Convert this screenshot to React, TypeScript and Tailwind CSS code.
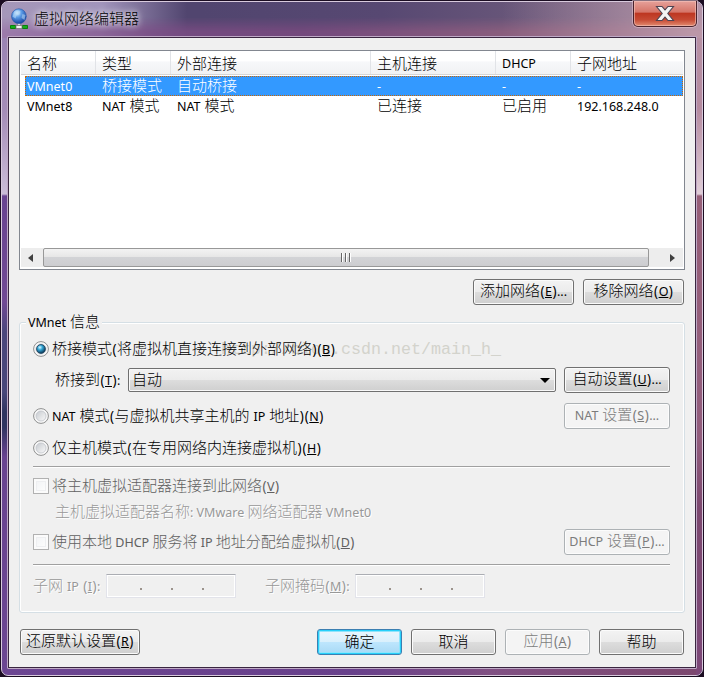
import React from "react";

const CJK = /([\u3000-\u9fff]+)/;

// Latin run: brackets are drawn a little wider, "&" marks the accelerator key.
function Latin({ run }: { run: string }) {
  return (
    <span className="font-['Noto_Sans',sans-serif] text-[12.5px] leading-none [word-spacing:0.7px]">
      {run.split(/(&.|[()])/).filter(Boolean).map((p, j) => {
        if (p === "(" || p === ")") return <span key={j} className="inline-block w-[5px] text-center text-[13.5px]">{p}</span>;
        if (p[0] === "&") return <u key={j} className="text-[12.5px] underline-offset-1">{p[1]}</u>;
        return p;
      })}
    </span>
  );
}

function T({ s, c = "-top-px" }: { s: string; c?: string }) {
  return (
    <span className={`relative inline-block whitespace-pre leading-none ${c}`}>
      {s.split(CJK).filter(Boolean).map((run, i) =>
        CJK.test(run) ? (
          <span key={i} className="font-['Noto_Sans_CJK_SC',sans-serif] text-[15px] font-light leading-none">{run}</span>
        ) : (
          <Latin key={i} run={run} />
        ),
      )}
    </span>
  );
}

function Btn({ s, c = "w-[85px]", kind = "normal" }: { s: string; c?: string; kind?: "normal" | "off" | "primary" }) {
  const look = {
    normal: "border-[#707070] bg-[linear-gradient(#f3f3f3,#ebebeb_50%,#dddddd_50%,#cfcfcf)] shadow-[inset_0_0_0_1px_#fbfbfb] text-black",
    off: "border-[#adb2b5] bg-[#f4f4f4] shadow-[inset_0_0_0_1px_#fcfcfc] text-[#7c7c7c]",
    primary: "border-[#3c7fb1] bg-[linear-gradient(#eaf6fd,#d9f0fc_50%,#bee6fd_50%,#a7d9f5)] shadow-[inset_0_0_0_1px_#27d0fa,inset_0_0_0_2px_#8fe4fc] text-black",
  }[kind];
  return (
    <button className={`h-[26px] shrink-0 flex items-center justify-center rounded-[3px] border pb-px ${look} ${c}`}>
      <T s={s} />
    </button>
  );
}

function Radio({ on = false }: { on?: boolean }) {
  return (
    <svg width="16" height="16" viewBox="0 0 16 16" className="shrink-0">
      <defs>
        <radialGradient id="dot" cx=".38" cy=".32" r=".7">
          <stop offset="0" stopColor="#d8f8ff" /><stop offset=".4" stopColor="#35a8d8" /><stop offset="1" stopColor="#09304e" />
        </radialGradient>
        <linearGradient id="well" x2="1" y2="1"><stop stopColor="#c6cacf" /><stop offset="1" stopColor="#fafafa" /></linearGradient>
      </defs>
      <circle cx="8" cy="8" r="7.4" fill="#f8f8f8" stroke="#8e8f8f" />
      <circle cx="8" cy="8" r="5" fill="url(#well)" stroke="#c0c4ca" strokeWidth=".8" />
      {on && <circle cx="8" cy="8" r="4.4" fill="url(#dot)" stroke="#153f5c" strokeWidth=".8" />}
    </svg>
  );
}

function Check() {
  return (
    <span className="h-4 w-4 shrink-0 border border-[#b1b1b1] bg-[#fbfbfb] p-[2px]">
      <span className="block h-full w-full border border-[#eeeff1] bg-[linear-gradient(135deg,#f3f4f6,#fcfcfc)]" />
    </span>
  );
}

function IpField() {
  return (
    <span className="flex h-6 w-[130px] shrink-0 items-center border border-[#e2e3ea] border-t-[#abadb3] pl-[33px] shadow-[inset_0_0_0_1px_#fff]">
      {[0, 1, 2].map((i) => <i key={i} className="mr-[29px] mt-[5px] h-[2px] w-[2px] bg-[#9b938c]" />)}
    </span>
  );
}

const cols = ["w-[75px]", "w-[75px]", "w-[200px]", "w-[125px]", "w-[75px]", "w-[106px]"];
function Row({ cells, c }: { cells: string[]; c: string }) {
  return (
    <div className={`flex h-5 items-center ${c}`}>
      {cells.map((t, i) => <span key={i} className={`flex shrink-0 items-center pl-[2px] ${cols[i]}`}><T s={t} /></span>)}
    </div>
  );
}

const Rule = () => <div className="h-[2px] w-[637px] border-t border-[#a0a0a0] bg-white" />;

function NetIcon() {
  return (
    <svg width="20" height="22" viewBox="0 0 20 22" className="shrink-0">
      <defs>
        <radialGradient id="globe" cx=".38" cy=".28" r=".75">
          <stop stopColor="#d6efff" /><stop offset=".4" stopColor="#5b9be6" /><stop offset="1" stopColor="#123f9c" />
        </radialGradient>
      </defs>
      <path d="M7.5 15h3v4h-3z" fill="#d7dce0" stroke="#667" strokeWidth=".5" />
      <circle cx="8.9" cy="8.2" r="7.4" fill="url(#globe)" stroke="#2356a8" strokeWidth=".6" />
      <path d="M4.5 3.5q3-2 6 0l-1 3-3 1-1 3-3-2zM12.5 6l3 1-1 5-3-2z" fill="#b9dcf8" opacity=".55" />
      <path d="M.5 17.5h5v3h-5zM12.5 17.5h5v3h-5z" fill="#14b01c" stroke="#0a7f0d" />
      <path d="M6 17.5h6v3H6z" fill="#f3f3f3" stroke="#777" strokeWidth=".8" />
    </svg>
  );
}

export default function App() {
  return (
    <div className="h-[677px] w-[704px] overflow-hidden bg-[#1b0d22] p-px">
      <div className="relative flex h-[675px] w-[702px] flex-col rounded-[7px] border border-[#d8cadd] bg-[linear-gradient(#8e80b0_0,#9b84b4_40px,#a58db8_110px,#cbbcd8_192px,#694391_194px,#714994_300px,#4b477c_330px,#49477a_390px,#303460_410px,#303460_425px,#694390_455px,#6c4692)] px-[5px]">
        <div className="absolute inset-x-0 top-0 h-[36px] rounded-t-[6px] bg-[linear-gradient(90deg,#a597b9_0,#a194bb_100px,transparent_185px,transparent_500px,#b394a8_690px),linear-gradient(90deg,#51456f_200px,#574872_380px,#75617f_620px)]" />
        <div className="absolute inset-x-0 top-[15px] h-[21px] bg-[linear-gradient(90deg,#9a75a8_0,#7d4d86_150px,#7c4a80_300px,#92607f_500px,#bd98a8_690px)] opacity-80 [mask-image:linear-gradient(transparent,#000_70%)]" />
        <div className="absolute bottom-0 right-0 top-[36px] w-[7px] rounded-br-[6px] bg-[linear-gradient(#b791a4,#b48a9f_70px,#dfcdd7_156px,#965f78_158px,#925d7d_400px,#7c486f_470px,#7c4878)]" />
        <div className="absolute bottom-0 left-[7px] right-[6px] h-[7px] bg-[linear-gradient(90deg,#6c4692,#68408b_50%,#805083_70%,#7c486f)]" />
        <div className="relative flex h-[34px] shrink-0 items-center pl-[3px]">
          <NetIcon />
          <span className="ml-[4px] [text-shadow:0_0_6px_#fff,0_0_10px_#fff9]"><T s="虚拟网络编辑器" /></span>
          <button className="absolute right-0 top-[-1px] flex h-[26px] w-[64px] items-center justify-center rounded-b-[5px] border border-t-0 border-[#49222d] bg-[linear-gradient(#e6a19a,#d57468_45%,#bd3520_48%,#c64a34_75%,#e28b70)] shadow-[inset_0_0_0_1px_#f4c5bc99,0_0_0_1px_#e5c7d288]">
            <svg width="20" height="18" viewBox="0 0 20 18">
              <path d="M1.5 1.5h5.5l3 3.4 3-3.4h5.5l-5.7 7 5.7 7h-5.5l-3-3.4-3 3.4H1.5l5.7-7z" fill="#f3f3f3" stroke="#4d4352" strokeWidth="1.1" />
            </svg>
          </button>
        </div>
        <div className="relative box-border flex h-[633px] w-[690px] shrink-0 flex-col rounded-[1px] border border-[#bfa9c6]">
          <div className="flex h-[631px] w-[688px] flex-col border border-[#3a2640] bg-[#f0f0f0] pl-[10px] pt-[12px]">
            <div className="flex h-[220px] w-[666px] shrink-0 flex-col border border-[#828790] bg-white px-px">
              <div className="flex h-[24px] shrink-0 border-b border-[#d5d5d5] bg-[linear-gradient(#fff_45%,#f7f8fa_46%,#f1f2f4)]">
                {["名称", "类型", "外部连接", "主机连接", "DHCP", "子网地址"].map((t, i) => (
                  <span key={t} className={`flex shrink-0 items-center ${cols[i]} ${i === 5 ? "pl-[6px]" : "border-r border-[#e1e3e7] pl-[6px]"}`}><T s={t} c="top-0" /></span>
                ))}
              </div>
              <div className="ml-[4px] mt-px">
                <Row cells={["VMnet0", "桥接模式", "自动桥接", "-", "-", "-"]} c="bg-[#3399ff] text-white outline-1 outline-dotted -outline-offset-1 outline-[#cc6600]" />
                <Row cells={["VMnet8", "NAT 模式", "NAT 模式", "已连接", "已启用", "192.168.248.0"]} c="text-black" />
              </div>
              <div className="mt-auto mb-[2px] flex h-[19px] items-center bg-[#ededed]">
                <span className="ml-[7px] border-y-4 border-r-[5px] border-y-transparent border-r-[#404040]" />
                <div className="ml-[10px] flex h-[19px] w-[606px] items-center justify-center gap-[2px] rounded-[2px] border border-[#989898] bg-[linear-gradient(#f3f3f3,#e6e6e6_48%,#d2d3d6_50%,#cdcdd0)]">
                  {[0, 1, 2].map((i) => <i key={i} className="h-[9px] w-[2px] border-r border-white bg-[#666]" />)}
                </div>
                <span className="ml-[21px] border-y-4 border-l-[5px] border-y-transparent border-l-[#404040]" />
              </div>
            </div>
            <div className="mt-[9px] flex w-[665px] justify-end gap-[9px]">
              <Btn s="添加网络(&E)..." c="w-[101px]" /><Btn s="移除网络(&O)" c="w-[101px]" />
            </div>
            <fieldset className="relative mt-[17px] flex h-[291px] w-[666px] shrink-0 flex-col rounded-[3px] border border-[#d5dfe5] pl-[13px] shadow-[inset_0_0_0_1px_#fff]">
              <span className="absolute left-[6px] top-[-10px] flex h-[18px] items-center bg-[#f0f0f0] px-[2px]"><T s="VMnet 信息" /></span>
              <span className="pointer-events-none absolute left-[201px] top-[18px] whitespace-pre font-['Liberation_Mono',monospace] text-[16.67px] leading-[18px] text-[#d3d3cc]">http://blog.csdn.net/main_h_</span>
              <div className="relative mt-[17px] flex h-[17px] items-center"><Radio on /><span className="ml-[3px]"><T s="桥接模式(将虚拟机直接连接到外部网络)(&B)" /></span></div>
              <div className="mt-[10px] flex h-[26px] items-center">
                <span className="w-[95px] shrink-0 pl-[22px]"><T s="桥接到(&T):" /></span>
                <div className="flex h-[24px] w-[428px] items-center justify-between rounded-[2px] border border-[#707070] bg-[linear-gradient(#f2f2f2,#ebebeb_50%,#dddddd_50%,#cfcfcf)] pb-px pl-[3px] pr-[5px] shadow-[inset_0_0_0_1px_#f9f9f9]">
                  <T s="自动" /><span className="mt-[2px] border-x-[5px] border-t-[5px] border-x-transparent border-t-black" />
                </div>
                <Btn s="自动设置(&U)..." c="ml-[8px] w-[106px]" />
              </div>
              <div className="mt-[10px] flex h-[26px] items-center"><Radio /><span className="ml-[3px] w-[512px]"><T s="NAT 模式(与虚拟机共享主机的 IP 地址)(&N)" /></span><Btn s="NAT 设置(&S)..." c="w-[106px]" kind="off" /></div>
              <div className="mt-[10px] flex h-[18px] items-center"><Radio /><span className="ml-[3px]"><T s="仅主机模式(在专用网络内连接虚拟机)(&H)" /></span></div>
              <div className="mt-[9px]"><Rule /></div>
              <div className="mt-[10px] flex h-4 items-center text-[#606060]"><Check /><span className="ml-[3px]"><T s="将主机虚拟适配器连接到此网络(&V)" /></span></div>
              <div className="mt-[9px] flex h-4 items-center pl-[22px] text-[#989898] [text-shadow:1px_1px_#fff]"><T s="主机虚拟适配器名称: VMware 网络适配器 VMnet0" c="top-0 [&_*]:[word-spacing:0px]" /></div>
              <div className="mt-[10px] flex h-[26px] items-center text-[#606060]"><Check /><span className="ml-[3px] w-[512px]"><T s="使用本地 DHCP 服务将 IP 地址分配给虚拟机(&D)" c="-top-px [&_*]:[word-spacing:0px]" /></span><Btn s="DHCP 设置(&P)..." c="w-[106px]" kind="off" /></div>
              <div className="mt-[9px]"><Rule /></div>
              <div className="mt-[8px] flex h-[24px] items-center text-[#989898] [text-shadow:1px_1px_#fff]">
                <span className="w-[73px] shrink-0"><T s="子网 IP (&I):" /></span><IpField />
                <span className="w-[119px] shrink-0 pl-[29px]"><T s="子网掩码(&M):" /></span><IpField />
              </div>
            </fieldset>
            <div className="ml-px mt-[16px] flex w-[664px] gap-[9px]">
              <Btn s="还原默认设置(&R)" c="mr-auto w-[120px]" />
              <Btn s="确定" kind="primary" /><Btn s="取消" /><Btn s="应用(&A)" kind="off" /><Btn s="帮助" />
            </div>
          </div>
        </div>
      </div>
    </div>
  );
}
